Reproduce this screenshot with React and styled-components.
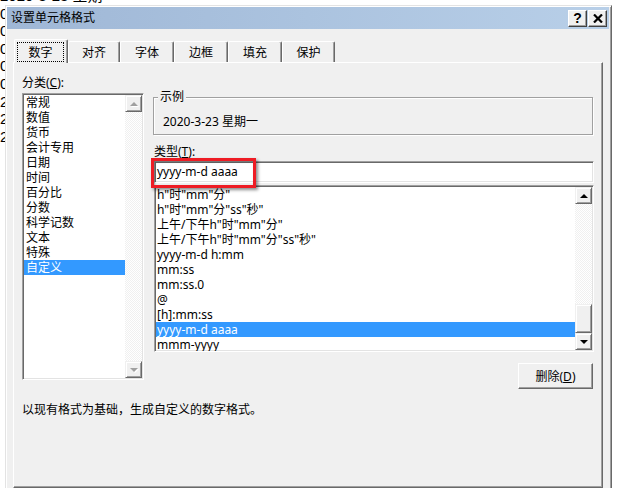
import React from "react";
import styled, { createGlobalStyle, css } from "styled-components";

const ui = `"Noto Sans", "Noto Sans CJK SC", sans-serif`;

const GlobalStyle = createGlobalStyle`
  html, body {
    margin: 0;
    padding: 0;
    background: #fff;
  }
  body {
    font-family: ${ui};
  }
`;

// the spreadsheet behind the dialog
const Desktop = styled.div`
  position: relative;
  width: 617px;
  height: 488px;
  overflow: hidden;
  background: #fff;
`;

const Sheet = styled.div`
  margin-top: -13px;
  font-family: "Liberation Sans", "Noto Sans CJK SC", sans-serif;
  font-size: 15px;
  line-height: 17.6px;
  color: #000;
  white-space: nowrap;
`;

// classic win dialog, sits over the sheet
const Dialog = styled.div`
  position: absolute;
  left: 5px;
  top: 5px;
  width: 607px;
  height: 490px;
  box-sizing: border-box;
  background: #f0f0f0;
  border-left: 1px solid #e3e3e3;
  border-top: 1px solid #e3e3e3;
  border-right: 1px solid #696969;
  box-shadow: inset 1px 1px 0 #fff, inset -1px 0 0 #a0a0a0;
  padding: 1px 2px 0 1px;
  display: flex;
  flex-direction: column;
`;

const TitleBar = styled.div`
  height: 22px;
  display: flex;
  align-items: center;
  padding: 0 2px 0 4px;
  background: linear-gradient(to right, #9fb7d6 0%, #abc3df 50%, #b8cfe8 100%);
`;

const Title = styled.div`
  flex: 1;
  font-size: 12px;
  color: #000;
  line-height: 22px;
`;

const CaptionButtons = styled.div`
  display: flex;
  gap: 1px;
`;

const CaptionButton = styled.div`
  width: 19px;
  height: 17px;
  box-sizing: border-box;
  background: #f0f0f0;
  border-top: 1px solid #fff;
  border-left: 1px solid #fff;
  border-right: 1px solid #404040;
  border-bottom: 1px solid #404040;
  box-shadow: inset -1px -1px 0 #a0a0a0;
  display: flex;
  align-items: center;
  justify-content: center;
  font-family: "Liberation Sans", sans-serif;
  font-weight: bold;
  font-size: 14px;
  line-height: 14px;
  color: #000;
`;

const Body = styled.div`
  flex: 1;
  padding: 10px 6px 0 6px;
  display: flex;
  flex-direction: column;
`;

const TabRow = styled.div`
  display: flex;
  align-items: flex-end;
  padding-left: 1px;
  height: 23px;
  position: relative;
  z-index: 1;
`;

const Tab = styled.div`
  width: ${({ w }) => w}px;
  height: 21px;
  box-sizing: border-box;
  border-top: 1px solid #fff;
  border-left: 1px solid #fff;
  border-right: 1px solid #696969;
  box-shadow: inset -1px 0 0 #a0a0a0;
  border-radius: 2px 2px 0 0;
  background: #f0f0f0;
  font-size: 12px;
  color: #000;
  display: flex;
  align-items: center;
  justify-content: center;

  ${({ active }) =>
    active &&
    css`
      height: 24px;
      margin-bottom: -1px;
      padding: 2px 3px 1px 2px;
      align-items: stretch;
    `}
`;

const FocusLabel = styled.span`
  flex: 1;
  border: 1px dotted #000;
  display: flex;
  align-items: center;
  justify-content: center;
`;

const Panel = styled.div`
  height: 426px;
  box-sizing: border-box;
  border-top: 1px solid #fff;
  border-left: 1px solid #fff;
  border-right: 1px solid #696969;
  border-bottom: 1px solid #696969;
  box-shadow: inset -1px -1px 0 #a0a0a0;
  padding: 13px 8px 0 8px;
  font-size: 12px;
  color: #000;
`;

const Columns = styled.div`
  display: flex;
  gap: 10px;
`;

const LeftCol = styled.div`
  width: 122px;
  display: flex;
  flex-direction: column;
`;

const RightCol = styled.div`
  flex: 1;
  display: flex;
  flex-direction: column;
`;

const Label = styled.div`
  font-size: 12px;
  line-height: 14px;
  height: ${({ h }) => h || 14}px;
  margin-top: ${({ mt }) => mt || 0}px;

  u {
    text-decoration: underline;
    text-underline-offset: 1px;
  }
`;

const Sunken = css`
  box-sizing: border-box;
  background: #fff;
  border-top: 1px solid #a0a0a0;
  border-left: 1px solid #a0a0a0;
  border-right: 1px solid #fff;
  border-bottom: 1px solid #fff;
  box-shadow: inset 1px 1px 0 #696969, inset -1px -1px 0 #e3e3e3;
`;

const ListBox = styled.div`
  ${Sunken};
  height: ${({ h }) => h}px;
  margin-top: ${({ mt }) => mt || 0}px;
  padding: 1px;
  display: flex;
  overflow: hidden;
`;

const Items = styled.div`
  flex: 1;
`;

const Item = styled.div`
  height: 15px;
  line-height: 15px;
  padding-left: ${({ pl }) => pl || 1}px;
  white-space: nowrap;
  font-size: 12px;
  color: ${({ selected }) => (selected ? "#fff" : "#000")};
  background: ${({ selected }) => (selected ? "#3399ff" : "transparent")};
`;

const ScrollBar = styled.div`
  width: 17px;
  display: flex;
  flex-direction: column;
`;

const Raised = css`
  box-sizing: border-box;
  background: #f0f0f0;
  border-top: 1px solid #f0f0f0;
  border-left: 1px solid #f0f0f0;
  border-right: 1px solid #696969;
  border-bottom: 1px solid #696969;
  box-shadow: inset 1px 1px 0 #fff, inset -1px -1px 0 #a0a0a0;
`;

const ScrollButton = styled.div`
  ${Raised};
  height: 17px;
  display: flex;
  align-items: center;
  justify-content: center;
`;

const Arrow = styled.span`
  width: 0;
  height: 0;
  border-left: 4px solid transparent;
  border-right: 4px solid transparent;
  ${({ down }) => (down ? "border-top" : "border-bottom")}: 4px solid
    ${({ disabled }) => (disabled ? "#a0a0a0" : "#000")};
  ${({ disabled }) => disabled && "filter: drop-shadow(1px 1px 0 #fff);"}
`;

const Track = styled.div`
  flex: 1;
  background: repeating-conic-gradient(#f0f0f0 0 25%, #fff 0 50%) 0 0 / 2px 2px;
`;

const Thumb = styled.div`
  ${Raised};
  height: 29px;
`;

const Group = styled.div`
  position: relative;
  margin-top: 21px;
  margin-left: -1px;
  margin-right: 1px;
  height: 38px;
  box-sizing: border-box;
  border: 1px solid #a0a0a0;
  box-shadow: inset 1px 1px 0 #fff, 1px 1px 0 #fff;
  padding: 17px 0 0 9px;
  line-height: 14px;
`;

const Legend = styled.span`
  position: absolute;
  left: 4px;
  top: -8px;
  padding: 0 2px;
  background: #f0f0f0;
  line-height: 14px;
`;

const InputWrap = styled.div`
  position: relative;
  margin-top: 2px;
`;

const Input = styled.div`
  ${Sunken};
  height: 22px;
  padding-left: 2px;
  line-height: 20px;
  font-size: 12px;
`;

const RedMark = styled.div`
  position: absolute;
  left: -3px;
  top: -3px;
  width: 105px;
  height: 30px;
  box-sizing: border-box;
  border: 3px solid #ee1c24;
  box-shadow: 2px 2px 3px rgba(0, 0, 0, 0.45),
    inset 1px 1px 2px rgba(0, 0, 0, 0.35);
  pointer-events: none;
`;

const ButtonRow = styled.div`
  display: flex;
  justify-content: flex-end;
  margin-top: 11px;
  padding-right: 1px;
`;

const PushButton = styled.div`
  box-sizing: border-box;
  width: 75px;
  height: 26px;
  background: #f0f0f0;
  border-top: 1px solid #fff;
  border-left: 1px solid #fff;
  border-right: 1px solid #696969;
  border-bottom: 1px solid #696969;
  box-shadow: inset -1px -1px 0 #a0a0a0;
  display: flex;
  align-items: center;
  justify-content: center;
  font-size: 12px;

  u {
    text-underline-offset: 1px;
  }
`;

const Description = styled.div`
  margin-top: 14px;
  line-height: 14px;
`;

const tabs = [
  { label: "数字", w: 54 },
  { label: "对齐", w: 52 },
  { label: "字体", w: 54 },
  { label: "边框", w: 54 },
  { label: "填充", w: 54 },
  { label: "保护", w: 53 },
];

const categories = [
  "常规",
  "数值",
  "货币",
  "会计专用",
  "日期",
  "时间",
  "百分比",
  "分数",
  "科学记数",
  "文本",
  "特殊",
  "自定义",
];

const formats = [
  'h"时"mm"分"',
  'h"时"mm"分"ss"秒"',
  '上午/下午h"时"mm"分"',
  '上午/下午h"时"mm"分"ss"秒"',
  "yyyy-m-d h:mm",
  "mm:ss",
  "mm:ss.0",
  "@",
  "[h]:mm:ss",
  "yyyy-m-d aaaa",
  "mmm-yyyy",
];

const sheetLines = ["2020-3-23 星期一", "0", "0", "0", "0", "0", "2", "2", "2"];

const CloseIcon = () => (
  <svg width="10" height="9" viewBox="0 0 10 9">
    <path d="M1 0.5 L9 8.5 M9 0.5 L1 8.5" stroke="#000" strokeWidth="2.2" />
  </svg>
);

const App = () => {
  return (
    <>
      <GlobalStyle />
      <Desktop>
        <Sheet>
          {sheetLines.map((t, i) => (
            <div key={i}>{t}</div>
          ))}
        </Sheet>

        <Dialog>
          <TitleBar>
            <Title>设置单元格格式</Title>
            <CaptionButtons>
              <CaptionButton>?</CaptionButton>
              <CaptionButton>
                <CloseIcon />
              </CaptionButton>
            </CaptionButtons>
          </TitleBar>

          <Body>
            <TabRow>
              {tabs.map((t, i) =>
                i === 0 ? (
                  <Tab key={t.label} w={t.w} active>
                    <FocusLabel>{t.label}</FocusLabel>
                  </Tab>
                ) : (
                  <Tab key={t.label} w={t.w}>
                    {t.label}
                  </Tab>
                )
              )}
            </TabRow>

            <Panel>
              <Columns>
                <LeftCol>
                  <Label h={17}>
                    分类(<u>C</u>):
                  </Label>
                  <ListBox h={287}>
                    <Items>
                      {categories.map((c) => (
                        <Item key={c} pl={2} selected={c === "自定义"}>
                          {c}
                        </Item>
                      ))}
                    </Items>
                    <ScrollBar>
                      <ScrollButton>
                        <Arrow disabled />
                      </ScrollButton>
                      <Track />
                      <ScrollButton>
                        <Arrow down disabled />
                      </ScrollButton>
                    </ScrollBar>
                  </ListBox>
                </LeftCol>

                <RightCol>
                  <Group>
                    <Legend>示例</Legend>
                    2020-3-23 星期一
                  </Group>
                  <Label mt={10}>
                    类型(<u>T</u>):
                  </Label>
                  <InputWrap>
                    <Input>yyyy-m-d aaaa</Input>
                    <RedMark />
                  </InputWrap>
                  <ListBox h={167} mt={2}>
                    <Items>
                      {formats.map((f) => (
                        <Item key={f} selected={f === "yyyy-m-d aaaa"}>
                          {f}
                        </Item>
                      ))}
                    </Items>
                    <ScrollBar>
                      <ScrollButton>
                        <Arrow />
                      </ScrollButton>
                      <Track />
                      <Thumb />
                      <ScrollButton>
                        <Arrow down />
                      </ScrollButton>
                    </ScrollBar>
                  </ListBox>
                  <ButtonRow>
                    <PushButton>
                      删除(<u>D</u>)
                    </PushButton>
                  </ButtonRow>
                </RightCol>
              </Columns>
              <Description>以现有格式为基础，生成自定义的数字格式。</Description>
            </Panel>
          </Body>
        </Dialog>
      </Desktop>
    </>
  );
};

export default App;
